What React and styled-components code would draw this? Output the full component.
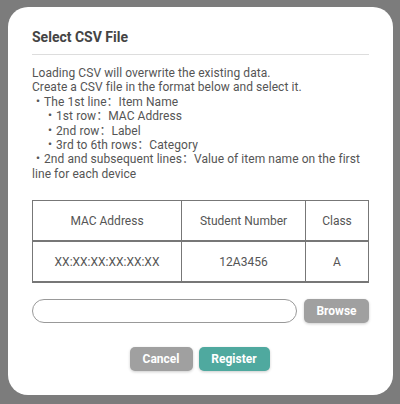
import React from "react";
import styled, { createGlobalStyle } from "styled-components";

const GlobalStyle = createGlobalStyle`
  html, body {
    margin: 0;
    padding: 0;
    background: #7c7c7c;
    font-family: Roboto, "Noto Sans CJK SC", sans-serif;
  }
`;

const Overlay = styled.div`
  width: 400px;
  height: 404px;
  padding: 7px 0 0 8px;
  box-sizing: border-box;
`;

const Modal = styled.div`
  width: 385px;
  box-sizing: border-box;
  background: #fff;
  border-radius: 20px;
  padding: 20px 24px 24px;
  color: #555;
`;

const Title = styled.h2`
  margin: 0;
  font-size: 14px;
  line-height: 20px;
  font-weight: 700;
  color: #444;
  padding-bottom: 7px;
  border-bottom: 1px solid #ddd;
`;

const Description = styled.div`
  margin-top: 11px;
  font-size: 12px;
  line-height: 14.4px;
  letter-spacing: 0.06px;
`;

const Line = styled.div`
  padding-left: ${(p) => p.indent * 12}px;
  white-space: pre-wrap;
`;

const Table = styled.table`
  margin-top: 19px;
  width: 100%;
  border-collapse: collapse;
  font-size: 12px;
  color: #555;
`;

const Th = styled.th`
  font-weight: 400;
  height: 39px;
  border: 1px solid #777;
  border-bottom: 2px solid #777;
  padding: 0;
  width: ${(p) => p.w}px;
`;

const Td = styled.td`
  height: 39px;
  border: 1px solid #777;
  border-bottom: 2px solid #777;
  text-align: center;
  padding: 0;
`;

const FileRow = styled.div`
  margin-top: 16px;
  display: flex;
  gap: 7px;
`;

const FileInput = styled.div`
  flex: 1;
  height: 24px;
  box-sizing: border-box;
  border: 1px solid #999;
  border-radius: 12px;
`;

const Button = styled.button`
  height: 24px;
  padding: 0;
  width: ${(p) => p.w}px;
  border: none;
  border-radius: 5px;
  background: ${(p) => p.bg};
  color: #fff;
  font-family: Roboto, sans-serif;
  font-weight: 700;
  font-size: 12px;
  box-shadow: 0 1px 3px rgba(0, 0, 0, 0.2);
`;

const Actions = styled.div`
  margin-top: 24px;
  display: flex;
  justify-content: center;
  gap: 6px;
  padding-right: 2px;
`;

const lines = [
  [0, "Loading CSV will overwrite the existing data."],
  [0, "Create a CSV file in the format below and select it."],
  [0, "・The 1st line：Item Name"],
  [1, "・1st row：MAC Address"],
  [1, "・2nd row：Label"],
  [1, "・3rd to 6th rows：Category"],
  [0, "・2nd and subsequent lines：Value of item name on the first line for each device"],
];

export default function App() {
  return (
    <>
      <GlobalStyle />
      <Overlay>
        <Modal>
          <Title>Select CSV File</Title>
          <Description>
            {lines.map(([indent, text], i) => (
              <Line key={i} indent={indent}>{text}</Line>
            ))}
          </Description>
          <Table>
            <thead>
              <tr>
                <Th w={148}>MAC Address</Th>
                <Th w={123}>Student Number</Th>
                <Th>Class</Th>
              </tr>
            </thead>
            <tbody>
              <tr>
                <Td>XX:XX:XX:XX:XX:XX</Td>
                <Td>12A3456</Td>
                <Td>A</Td>
              </tr>
            </tbody>
          </Table>
          <FileRow>
            <FileInput />
            <Button w={65} bg="#a0a0a0">Browse</Button>
          </FileRow>
          <Actions>
            <Button w={63} bg="#a0a0a0">Cancel</Button>
            <Button w={71} bg="#4fa99f">Register</Button>
          </Actions>
        </Modal>
      </Overlay>
    </>
  );
}
